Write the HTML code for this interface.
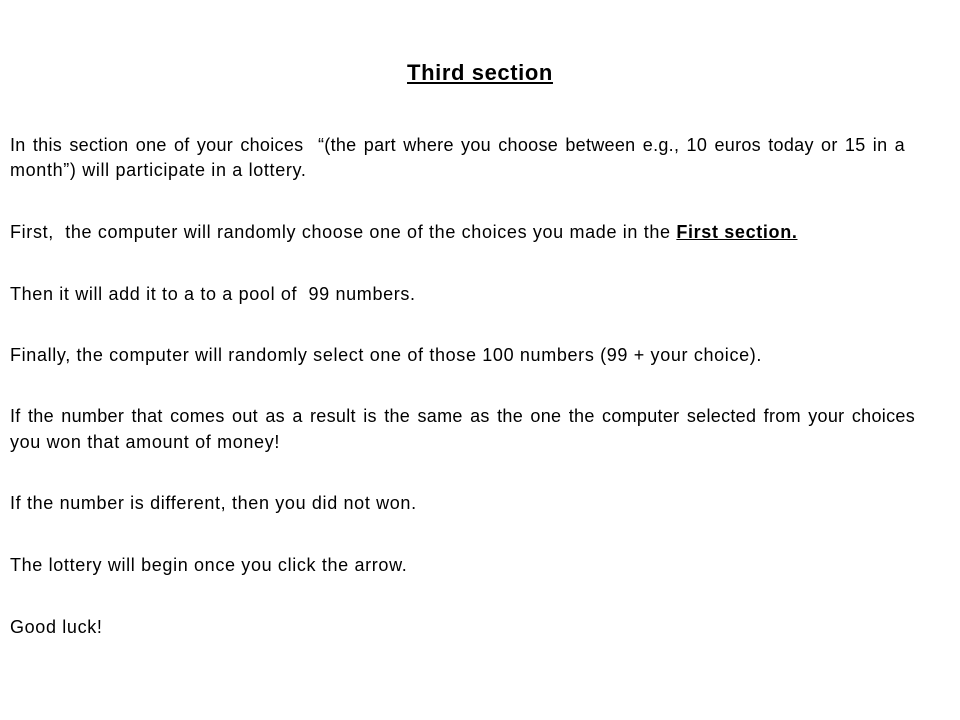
<!DOCTYPE html>
<html><head><meta charset="utf-8"><style>
body{margin:0;width:960px;height:720px;background:#fff;position:relative;overflow:hidden;font-family:"Liberation Sans",sans-serif;color:#000}
.l{position:absolute;left:10px;font-size:18px;letter-spacing:0.65px;white-space:nowrap;line-height:20px}
.t{position:absolute;left:0;width:960px;text-align:center;top:60px;font-size:22px;letter-spacing:0.6px;font-weight:bold;text-decoration:underline}
</style></head><body>
<div class="t">Third section</div>
<div class="l" style="top:135px;width:895px;text-align:justify;text-align-last:justify;white-space:normal;letter-spacing:0.3px">In this section one of your choices &nbsp;“(the part where you choose between e.g., 10 euros today or 15 in a</div>
<div class="l" style="top:160px">month”) will participate in a lottery.</div>
<div class="l" style="top:222px">First, &nbsp;the computer will randomly choose one of the choices you made in the <b><u>First section.</u></b></div>
<div class="l" style="top:284px">Then it will add it to a to a pool of &nbsp;99 numbers.</div>
<div class="l" style="top:345px">Finally, the computer will randomly select one of those 100 numbers (99 + your choice).</div>
<div class="l" style="top:406px;width:905px;text-align:justify;text-align-last:justify;white-space:normal;letter-spacing:0.3px">If the number that comes out as a result is the same as the one the computer selected from your choices</div>
<div class="l" style="top:432px">you won that amount of money!</div>
<div class="l" style="top:493px">If the number is different, then you did not won.</div>
<div class="l" style="top:555px">The lottery will begin once you click the arrow.</div>
<div class="l" style="top:617px">Good luck!</div>
</body></html>
